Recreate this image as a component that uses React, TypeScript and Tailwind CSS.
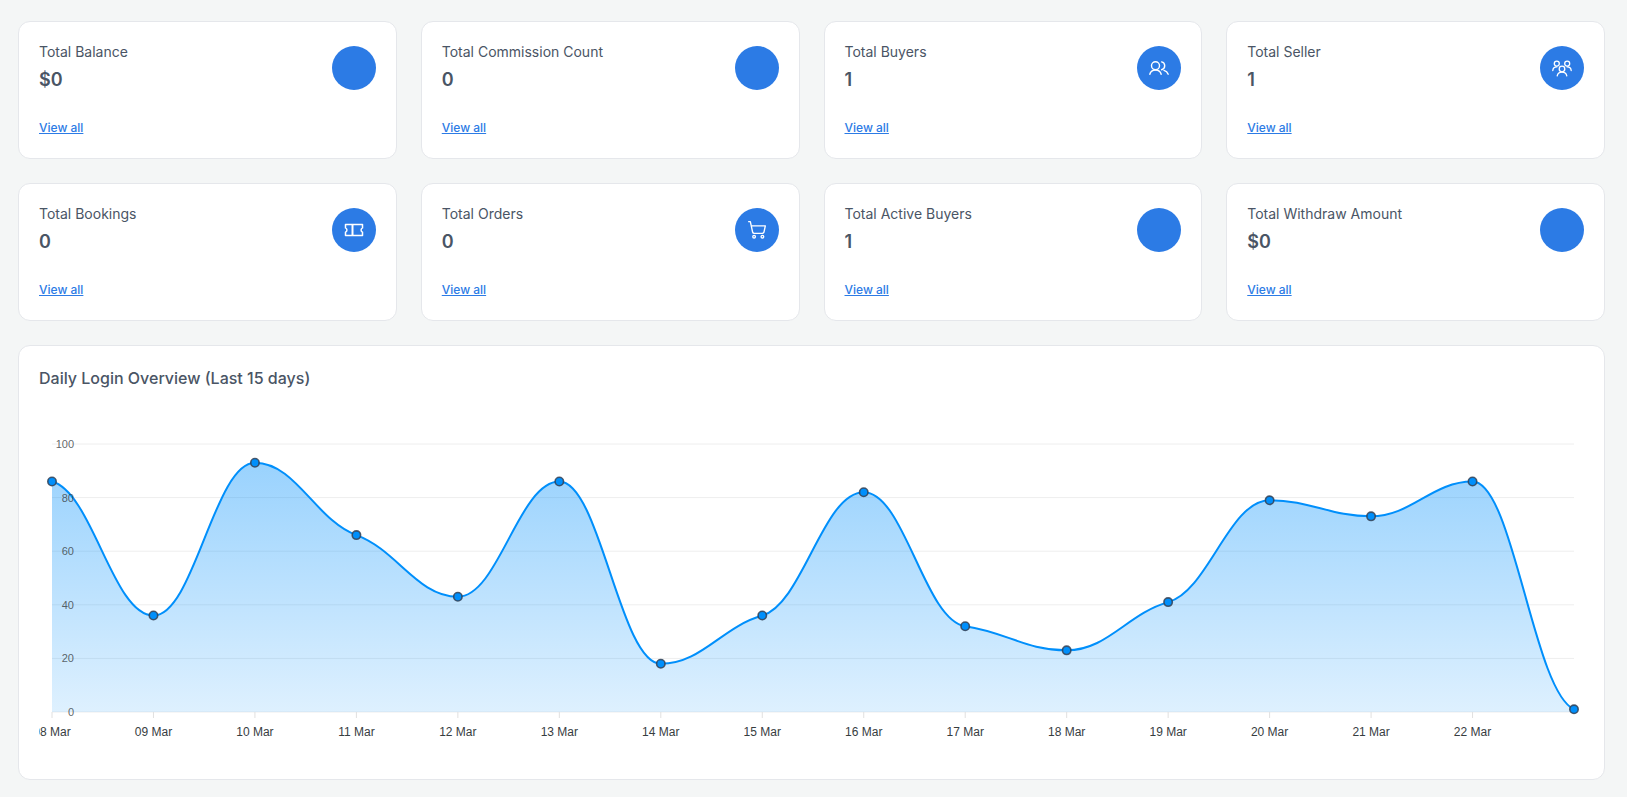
const cards = [
  { title: "Total Balance", value: "$0", icon: null },
  { title: "Total Commission Count", value: "0", icon: null },
  { title: "Total Buyers", value: "1", icon: <UsersIcon /> },
  { title: "Total Seller", value: "1", icon: <SellerIcon /> },
  { title: "Total Bookings", value: "0", icon: <TicketIcon /> },
  { title: "Total Orders", value: "0", icon: <CartIcon /> },
  { title: "Total Active Buyers", value: "1", icon: null },
  { title: "Total Withdraw Amount", value: "$0", icon: null },
];

const logins = [86, 36, 93, 66, 43, 86, 18, 36, 82, 32, 23, 41, 79, 73, 86, 1];
const days = ["08", "09", "10", "11", "12", "13", "14", "15", "16", "17", "18", "19", "20", "21", "22"];

// plot area inside the svg
const left = 13;
const right = 1535;
const top = 54;
const bottom = 322;
const stepX = (right - left) / (logins.length - 1);
const px = (i: number) => left + i * stepX;
const py = (v: number) => bottom - (v * (bottom - top)) / 100;

// smooth line: flat at peaks, shallow tangents on the way through other points
function linePath() {
  const xs = logins.map((_, i) => px(i));
  const ys = logins.map((v) => py(v));
  const slopes = xs.slice(1).map((x, i) => (ys[i + 1] - ys[i]) / (x - xs[i]));
  const t = xs.map((_, i) => {
    if (i === 0) return slopes[0] * 0.2;
    if (i === xs.length - 1) return slopes[i - 1] * 0.2;
    const a = slopes[i - 1];
    const b = slopes[i];
    if (a * b <= 0) return 0;
    return Math.sign(a) * Math.min(Math.abs(a), Math.abs(b)) * 0.6;
  });
  const h = stepX * 0.4;
  let d = `M${xs[0]} ${ys[0]}`;
  for (let i = 0; i < xs.length - 1; i++) {
    d += ` C${xs[i] + h} ${ys[i] + t[i] * h} ${xs[i + 1] - h} ${ys[i + 1] - t[i + 1] * h} ${xs[i + 1]} ${ys[i + 1]}`;
  }
  return d;
}

function UsersIcon() {
  return (
    <svg viewBox="0 0 28 28" className="h-7 w-7" fill="none" stroke="currentColor" strokeWidth="1.4" strokeLinecap="round">
      <circle cx="10.5" cy="11.8" r="4" />
      <path d="M16.6 7.9a4 4 0 0 1 0 7.8" />
      <path d="M4.8 20.2c.7-2.6 2.9-4.2 5.7-4.2s5 1.6 5.7 4.2" />
      <path d="M19 16.4c2 .6 3.5 1.9 4.2 3.8" />
    </svg>
  );
}

function SellerIcon() {
  return (
    <svg viewBox="0 0 28 28" className="h-7 w-7" fill="none" stroke="currentColor" strokeWidth="1.3" strokeLinecap="round">
      <circle cx="8.8" cy="9.6" r="2.5" />
      <circle cx="19.2" cy="9.6" r="2.5" />
      <circle cx="14" cy="15" r="2.8" />
      <path d="M4.8 16.5c.2-2.2 1.8-3.6 4-3.6" />
      <path d="M23.2 16.5c-.2-2.2-1.8-3.6-4-3.6" />
      <path d="M9.2 21.8c.5-2.2 2.4-3.6 4.8-3.6s4.3 1.4 4.8 3.6" />
    </svg>
  );
}

function TicketIcon() {
  return (
    <svg viewBox="0 0 28 28" className="h-7 w-7" fill="none" stroke="currentColor" strokeWidth="1.5" strokeLinejoin="round">
      <path d="M5.5 8.5h17v3.4a2.4 2.4 0 0 0 0 4.4v3.2h-17v-3.2a2.4 2.4 0 0 0 0-4.4z" />
      <path d="M12.5 8.5v11" strokeWidth="2" />
    </svg>
  );
}

function CartIcon() {
  return (
    <svg viewBox="0 0 24 24" className="h-5 w-5" fill="none" stroke="currentColor" strokeWidth="1.6" strokeLinecap="round" strokeLinejoin="round">
      <path d="M2 2h2l2.7 12.4a2 2 0 0 0 2 1.6h9.8a2 2 0 0 0 1.9-1.6L22 7H5.1" />
      <circle cx="8.5" cy="20" r="1.6" />
      <circle cx="18.5" cy="20" r="1.6" />
    </svg>
  );
}

function StatCard({ title, value, icon }: { title: string; value: string; icon: React.ReactNode }) {
  return (
    <div className="rounded-xl border border-gray-200 bg-white p-5">
      <div className="flex items-center justify-between">
        <div>
          <p className="text-sm text-gray-600">{title}</p>
          <p className="mt-1 text-lg font-semibold text-gray-600">{value}</p>
        </div>
        <div className="flex h-11 w-11 items-center justify-center rounded-full bg-[#2c7be5] text-white">{icon}</div>
      </div>
      <a href="#" className="mt-6 block text-xs leading-5 font-medium text-[#2c7be5] underline">
        View all
      </a>
    </div>
  );
}

function LoginChart() {
  const d = linePath();
  return (
    <svg viewBox="0 0 1545 368" className="mb-px block h-92 w-full font-['Liberation_Sans',sans-serif]">
      <defs>
        <linearGradient id="area" gradientUnits="userSpaceOnUse" x1="0" y1={py(93)} x2="0" y2={bottom}>
          <stop offset="0" stopColor="#008ffb" stopOpacity="0.4" />
          <stop offset="1" stopColor="#008ffb" stopOpacity="0.13" />
        </linearGradient>
      </defs>

      {[0, 20, 40, 60, 80, 100].map((v) => (
        <line key={v} x1={left} x2={right} y1={py(v)} y2={py(v)} stroke="#eeeeee" />
      ))}

      {days.map((day, i) => (
        <g key={day}>
          <line x1={px(i)} x2={px(i)} y1={bottom} y2={bottom + 6} stroke="#e0e0e0" />
          <text x={px(i)} y={bottom + 24} textAnchor="middle" fontSize="12" fill="#373d3f">
            {day} Mar
          </text>
        </g>
      ))}

      <path d={`${d} L${right} ${bottom} L${left} ${bottom} Z`} fill="url(#area)" />
      <path d={d} fill="none" stroke="#008ffb" strokeWidth="2" />

      {[0, 20, 40, 60, 80, 100].map((v) => (
        <text key={v} x={35} y={py(v) + 4} textAnchor="end" fontSize="11" fill="#373d3f" fillOpacity="0.8">
          {v}
        </text>
      ))}

      {logins.map((v, i) => (
        <circle key={i} cx={px(i)} cy={py(v)} r="4.2" fill="#008ffb" stroke="#334155" strokeOpacity="0.85" strokeWidth="1.6" />
      ))}
    </svg>
  );
}

export default function App() {
  return (
    <div className="min-h-screen bg-[#f4f6f6] pt-[21px] pr-[22px] pl-[18px] font-['Inter',sans-serif]">
      <div className="grid grid-cols-4 gap-6">
        {cards.map((card) => (
          <StatCard key={card.title} {...card} />
        ))}
      </div>
      <div className="mt-6 rounded-xl border border-gray-200 bg-white p-5">
        <h2 className="text-base font-medium text-gray-600">Daily Login Overview (Last 15 days)</h2>
        <LoginChart />
      </div>
    </div>
  );
}
